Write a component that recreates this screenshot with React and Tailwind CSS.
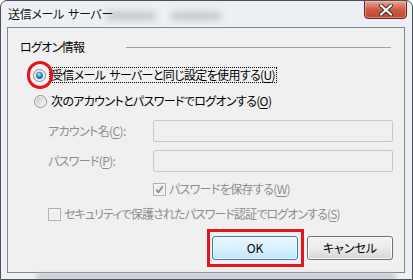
import React from "react";

const font = { fontFamily: '"Noto Sans CJK JP", "Noto Sans", sans-serif' };

function Radio({ checked }) {
  return (
    <svg width="13" height="13" viewBox="0 0 13 13" className="shrink-0">
      <defs>
        <linearGradient id={checked ? "rg1" : "rg2"} x1="0" y1="0" x2="1" y2="1">
          <stop offset="0" stopColor="#c9c9c9" />
          <stop offset="1" stopColor="#f6f6f6" />
        </linearGradient>
        <radialGradient id="dot" cx="0.45" cy="0.35" r="0.7">
          <stop offset="0" stopColor="#cdeeff" />
          <stop offset="0.45" stopColor="#2d9ce0" />
          <stop offset="1" stopColor="#0b4f8c" />
        </radialGradient>
      </defs>
      <circle cx="6.5" cy="6.5" r="6" fill="#f4f4f4" stroke="#8e8f8f" strokeWidth="1" />
      <circle cx="6.5" cy="6.5" r="4.5" fill={`url(#${checked ? "rg1" : "rg2"})`} />
      {checked && <circle cx="6.5" cy="6.5" r="3.4" fill="url(#dot)" />}
    </svg>
  );
}

function Check({ checked }) {
  return (
    <svg width="13" height="13" viewBox="0 0 13 13" className="shrink-0">
      <rect x="0.5" y="0.5" width="12" height="12" fill="#f4f4f4" stroke="#b1b1b1" />
      <rect x="2.5" y="2.5" width="8" height="8" fill="#ededed" />
      {checked && (
        <path d="M3.2 6.6 L5.4 9.2 L9.8 3.2" fill="none" stroke="#8f8f8f" strokeWidth="1.8" />
      )}
    </svg>
  );
}

function U({ children }) {
  return <span className="underline underline-offset-2">{children}</span>;
}

export default function App() {
  return (
    <div
      className="relative w-[413px] h-[280px] overflow-hidden rounded-t-[7px] border border-[#4c5056] bg-[#eceff3] text-[12px] leading-[16px] tracking-[-0.65px] [font-feature-settings:'palt']"
      style={font}
    >
      {/* blurred background behind glass */}
      <div className="absolute left-[105px] top-[10px] h-[10px] w-[50px] rounded bg-[#c9ccd1] blur-[3px]" />
      <div className="absolute left-[170px] top-[10px] h-[10px] w-[50px] rounded bg-[#c9ccd1] blur-[3px]" />
      <div className="absolute left-[35px] bottom-[0px] h-[5px] w-[360px] rounded bg-[#c2c6cb] blur-[2px]" />

      {/* title bar */}
      <div className="relative flex h-[26px] items-center pl-[7px] tracking-[-0.3px] text-[#111] [text-shadow:0_0_6px_#fff,0_0_3px_#fff]">
        送信メール<span className="ml-[4px]">サーバー</span>
        <div className="absolute right-[5px] top-[-1px] flex h-[19px] w-[43px] items-center justify-center rounded-b-[4px] border border-[#5e2a22] bg-gradient-to-b from-[#e8a89b] via-[#cf5a44] to-[#c4452d] shadow-[inset_0_0_0_1px_rgba(255,200,190,0.5)]">
          <svg width="14" height="12" viewBox="0 0 14 12">
            <path d="M2 1.5 L12 10.5 M12 1.5 L2 10.5" stroke="#3a2a2a" strokeWidth="4" strokeLinecap="round" />
            <path d="M2 1.5 L12 10.5 M12 1.5 L2 10.5" stroke="#ffffff" strokeWidth="2.2" strokeLinecap="round" />
          </svg>
        </div>
      </div>

      {/* client area */}
      <div className="ml-[6px] h-[246px] w-[398px] border border-[#83878c] bg-[#f0f0f0] text-black">
        {/* group header */}
        <div className="flex items-center pt-[11px] pl-[12px] pr-[13px]">
          <span>ログオン情報</span>
          <div className="ml-auto h-px w-[265px] bg-[#a0a0a0]" />
        </div>

        {/* radio 1 */}
        <div className="relative mt-[12px] flex items-center pl-[25px]">
          <Radio checked />
          <span className="ml-[3px] border border-dotted border-black px-[1px] leading-[14px]">
            受信メール<span className="ml-[4px]">サーバーと同じ設定を使用する(</span><U>U</U>)
          </span>
          <div className="absolute left-[19px] top-[-6px] h-[28px] w-[26px] rounded-full border-[3px] border-[#e51520]" />
        </div>

        {/* radio 2 */}
        <div className="mt-[10px] flex items-center pl-[26px]">
          <Radio />
          <span className="ml-[4px]">
            次のアカウントとパスワードでログオンする(<U>O</U>)
          </span>
        </div>

        {/* account */}
        <div className="mt-[11px] flex items-center pl-[40px] text-[#8d8d8d]">
          <span className="w-[105px]">
            アカウント名(<U>C</U>):
          </span>
          <div className="h-[22px] w-[240px] rounded-[2px] border border-[#c5c8cc] bg-[#f0f0f0]" />
        </div>

        {/* password */}
        <div className="mt-[8px] flex items-center pl-[40px] text-[#8d8d8d]">
          <span className="w-[105px]">
            パスワード(<U>P</U>):
          </span>
          <div className="h-[22px] w-[240px] rounded-[2px] border border-[#c5c8cc] bg-[#f0f0f0]" />
        </div>

        {/* save password */}
        <div className="mt-[9px] flex items-center pl-[145px] text-[#8d8d8d]">
          <Check checked />
          <span className="ml-[3px]">
            パスワードを保存する(<U>W</U>)
          </span>
        </div>

        {/* SPA */}
        <div className="mt-[9px] flex items-center pl-[40px] text-[#8d8d8d]">
          <Check />
          <span className="ml-[3px] tracking-[-0.9px]">
            セキュリティで保護されたパスワード認証でログオンする(<U>S</U>)
          </span>
        </div>

        {/* buttons */}
        <div className="mt-[14px] flex items-center justify-end gap-[9px] pr-[11px] tracking-normal">
          <div className="relative">
            <div className="flex h-[24px] w-[86px] items-center justify-center rounded-[3px] border border-[#3c7fb1] bg-gradient-to-b from-[#eaf6fd] via-[#d9f0fc] to-[#bee6fd] shadow-[inset_0_0_0_1px_rgba(255,255,255,0.7)]">
              OK
            </div>
            <div className="absolute left-[-5px] top-[-7px] h-[38px] w-[97px] border-[3px] border-[#e51520]" />
          </div>
          <div className="flex h-[24px] w-[86px] items-center justify-center rounded-[3px] border border-[#707070] bg-gradient-to-b from-[#f2f2f2] via-[#ebebeb] to-[#d6d6d6] shadow-[inset_0_0_0_1px_rgba(255,255,255,0.8)]">
            キャンセル
          </div>
        </div>
      </div>
    </div>
  );
}
